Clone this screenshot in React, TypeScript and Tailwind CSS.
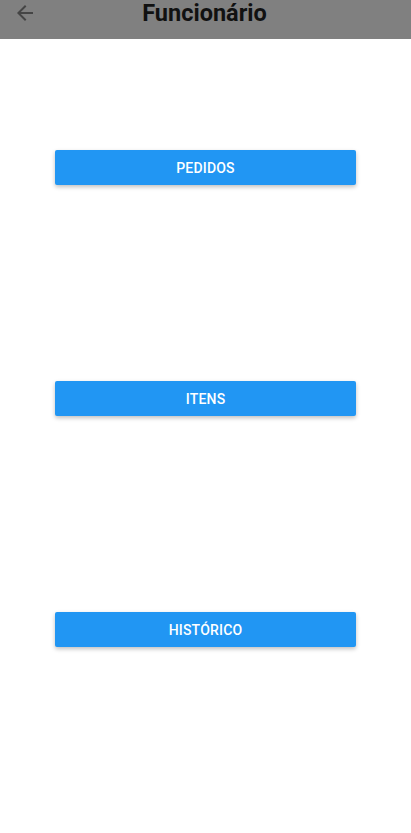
import React from 'react';

const menu = ['PEDIDOS', 'ITENS', 'HISTÓRICO'];

const App = () => {
  return (
    <div className="min-h-screen bg-white font-['Roboto',sans-serif]">
      {/* Header */}
      <header className="relative h-[39px] bg-[#808080] flex items-center justify-center">
        <svg className="absolute left-[13px] top-[1px] w-6 h-6" viewBox="0 0 24 24" fill="#454545">
          <path d="M20 11H7.83l5.59-5.59L12 4l-8 8 8 8 1.41-1.41L7.83 13H20v-2z" />
        </svg>
        <h1 className="text-[23.5px] font-bold text-[#111] leading-none -mt-[11px] ml-[-2px]">Funcionário</h1>
      </header>

      {/* Menu */}
      <div className="flex flex-col items-center pt-[111px] gap-[196px]">
        {menu.map((label) => (
          <button
            key={label}
            className="w-[301px] h-[35px] bg-[#2196f3] text-white text-[14px] font-medium rounded-[2px] shadow-[0_2px_4px_rgba(0,0,0,0.25)] tracking-[0.2px] pt-[2px]"
          >
            {label}
          </button>
        ))}
      </div>
    </div>
  );
};

export default App;
